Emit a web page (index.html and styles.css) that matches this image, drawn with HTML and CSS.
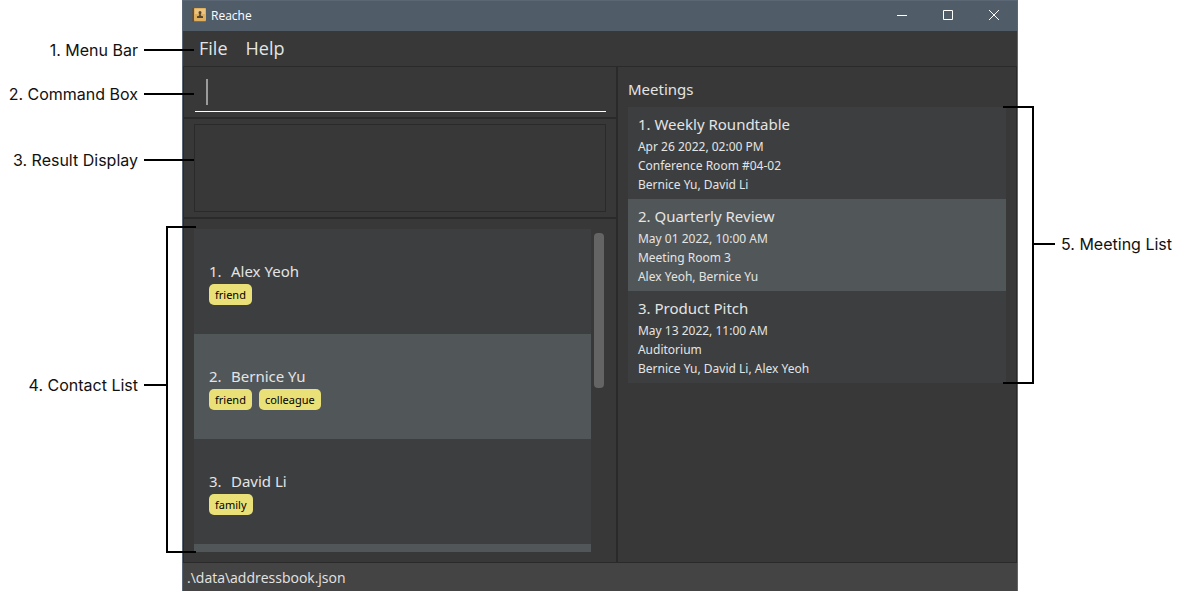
FILE: index.html
```html
<!DOCTYPE html>
<html lang="en">
<head>
<meta charset="utf-8">
<title>Reache</title>
<link rel="stylesheet" href="styles.css">
</head>
<body>
<main class="stage">
  <section class="window">
    <header class="titlebar">
      <svg class="app-icon" width="14" height="14" viewBox="0 0 14 14" aria-hidden="true">
        <rect x="0" y="0" width="14" height="14" rx="1" fill="#8a6a3e"/>
        <rect x="2" y="0" width="12" height="13" rx="1" fill="#dfae5f"/>
        <rect x="3" y="1" width="10" height="5" fill="#ecc481"/>
        <rect x="0" y="0" width="2" height="14" fill="#5e5141"/>
        <path d="M6.500 4.500a1.500 1.500 0 0 1 3 0c0 1-.5 1.300-.8 2 0 1 .3 1.500 2.300 1.800V10H5V8.300c2-.3 2.300-.8 2.300-1.800-.3-.7-.8-1-.8-2z" fill="#54452f"/>
      </svg>
      <h1 class="app-name">Reache</h1>
      <div class="window-controls">
        <button class="control" type="button" aria-label="Minimize"><svg width="10" height="10" viewBox="0 0 10 10"><path d="M0 5.500h10"/></svg></button>
        <button class="control" type="button" aria-label="Maximize"><svg width="10" height="10" viewBox="0 0 10 10"><path d="M.5.5h9v9h-9z"/></svg></button>
        <button class="control" type="button" aria-label="Close"><svg width="10" height="10" viewBox="0 0 10 10"><path d="M0 0l10 10M10 0L0 10"/></svg></button>
      </div>
    </header>

    <nav class="menubar">
      <button class="menu" type="button">File</button>
      <button class="menu" type="button">Help</button>
      <div class="callout callout-left callout-menu">1. Menu Bar<span class="leader leader-long"></span></div>
    </nav>

    <div class="panes">
      <div class="left-pane">
        <div class="command-pane">
          <input class="command-box" type="text" aria-label="Command">
          <span class="caret"></span>
          <div class="callout callout-left callout-command">2. Command Box<span class="leader leader-long"></span></div>
        </div>
        <div class="result-pane">
          <output class="result-display" aria-label="Result"></output>
          <div class="callout callout-left callout-result">3. Result Display<span class="leader leader-long"></span></div>
        </div>
        <div class="contact-pane">
          <ol class="contact-list">
            <li class="contact"><h2 class="contact-name"><span class="contact-index">1.</span>Alex Yeoh</h2><div class="tags"><span class="tag">friend</span></div></li>
            <li class="contact"><h2 class="contact-name"><span class="contact-index">2.</span>Bernice Yu</h2><div class="tags"><span class="tag">friend</span><span class="tag">colleague</span></div></li>
            <li class="contact"><h2 class="contact-name"><span class="contact-index">3.</span>David Li</h2><div class="tags"><span class="tag">family</span></div></li>
            <li class="contact"></li>
          </ol>
          <div class="scrollbar"><div class="thumb"></div></div>
          <div class="bracket bracket-left"></div>
          <div class="callout callout-left callout-contacts">4. Contact List<span class="leader leader-short"></span></div>
        </div>
      </div>

      <div class="right-pane">
        <h2 class="pane-title">Meetings</h2>
        <div class="meeting-area">
          <ol class="meeting-list">
            <li class="meeting"><h3 class="meeting-title">1. Weekly Roundtable</h3><p>Apr 26 2022, 02:00 PM</p><p>Conference Room #04-02</p><p>Bernice Yu, David Li</p></li>
            <li class="meeting"><h3 class="meeting-title">2. Quarterly Review</h3><p>May 01 2022, 10:00 AM</p><p>Meeting Room 3</p><p>Alex Yeoh, Bernice Yu</p></li>
            <li class="meeting"><h3 class="meeting-title">3. Product Pitch</h3><p>May 13 2022, 11:00 AM</p><p>Auditorium</p><p>Bernice Yu, David Li, Alex Yeoh</p></li>
          </ol>
          <div class="bracket bracket-right"></div>
          <div class="callout callout-right"><span class="leader leader-short"></span>5. Meeting List</div>
        </div>
      </div>
    </div>

    <footer class="statusbar">.\data\addressbook.json</footer>
  </section>
</main>
</body>
</html>
```
FILE: styles.css
```css
* { box-sizing: border-box; }

body {
  margin: 0;
  background: #fff;
  color: #e4e4e4;
  font-family: "Noto Sans", "Open Sans", sans-serif;
  font-size: 12px;
}

h1, h2, h3, p, ol { margin: 0; padding: 0; font-weight: 400; }
ol { list-style: none; }
button, input { font: inherit; color: inherit; background: none; border: 0; border-radius: 0; }

.stage { height: 100vh; padding: 0 182px; }

.window {
  display: flex;
  flex-direction: column;
  height: 100%;
  background: #383838;
  border: solid #5b6775;
  border-width: 1px 1px 0;
}

/* Title bar */
.titlebar {
  display: flex;
  align-items: center;
  flex: none;
  height: 30px;
  padding-left: 9px;
  background: #515c69;
  color: #fff;
}
.app-icon { margin: 0 5px 2px 0; }
.app-name { font-family: "Open Sans", sans-serif; font-size: 12px; line-height: 16px; }
.window-controls { display: flex; margin-left: auto; align-self: stretch; }
.control { display: flex; align-items: center; justify-content: center; width: 46px; padding: 0 0 2px; }
.control svg { fill: none; stroke: #fff; stroke-width: 1; }

/* Menu bar */
.menubar {
  position: relative;
  display: flex;
  flex: none;
  gap: 18px;
  height: 35px;
  padding: 0 16px;
}
.menu { padding: 0; font-family: "Open Sans", sans-serif; font-size: 18px; line-height: 35px; }

/* Split panes */
.panes {
  display: grid;
  grid-template-columns: 435fr 399fr;
  flex: 1;
  min-height: 0;
  border: 1px solid #2a2a2a;
}
.left-pane { display: flex; flex-direction: column; min-height: 0; border-right: 2px solid #2a2a2a; }

.command-pane {
  position: relative;
  flex: none;
  padding: 5px 10px 5px 11px;
  border-bottom: 2px solid #2a2a2a;
}
.command-box {
  display: block;
  width: 100%;
  height: 40px;
  padding: 0 12px;
  border-bottom: 1px solid #fff;
  outline: 0;
  font-size: 18px;
}
.caret { position: absolute; left: 22px; top: 12px; width: 2px; height: 26px; background: #9b9b9b; }

.result-pane { position: relative; flex: none; padding: 5px 10px; border-bottom: 2px solid #2a2a2a; }
.result-display { display: block; height: 88px; border: 1px solid #2a2a2a; }

.contact-pane { position: relative; display: flex; flex: 1; min-height: 0; padding: 10px; }
.contact-list { flex: 1; overflow: hidden; }
.contact { height: 105px; padding: 30px 15px 29px; background: #3c3e3f; }
.contact:nth-child(even), .meeting:nth-child(even) { background: #515658; }
.contact-name { display: flex; padding-bottom: 1px; font-size: 15px; line-height: 24px; }
.contact-index { min-width: 22px; }
.tags { display: flex; gap: 7px; }
.tag {
  padding: 0 6px;
  border-radius: 5px;
  background: #e9e077;
  color: #000;
  font-size: 11px;
  line-height: 21px;
}
.scrollbar { width: 15px; padding: 4px 2px 4px 3px; }
.thumb { height: 155px; border-radius: 4px; background: #646464; }

/* Meetings */
.right-pane { padding: 10px; }
.pane-title { font-size: 15px; line-height: 24px; padding-bottom: 6px; }
.meeting-area { position: relative; }
.meeting { padding: 5px 10px; background: #3c3e3f; line-height: 19px; }
.meeting-title { font-size: 15px; line-height: 25px; }

.statusbar {
  flex: none;
  height: 28px;
  padding: 1px 4px 0;
  background: #444;
  font-family: "Open Sans", sans-serif;
  font-size: 14px;
  line-height: 28px;
}

/* Callouts around the window */
.callout {
  position: absolute;
  display: flex;
  align-items: center;
  gap: 6px;
  color: #111;
  font-family: Inter, sans-serif;
  font-size: 16px;
  line-height: 20px;
  white-space: nowrap;
}
.leader { height: 2px; background: #000; }
.leader-long { width: 50px; }
.leader-short { width: 22px; }
.callout-left { right: calc(100% - 10px); }
.callout-menu { top: 9px; right: calc(100% - 11px); }
.callout-command { top: 17px; }
.callout-result { top: 31px; }
.callout-contacts { top: 156px; right: calc(100% + 18px); }
.callout-right { top: 127px; left: calc(100% + 27px); }

.bracket { position: absolute; border: 2px solid #000; }
.bracket-left { top: 7px; bottom: 9px; right: calc(100% - 12px); width: 30px; border-right: 0; }
.bracket-right { top: -1px; bottom: -1px; left: calc(100% - 3px); width: 31px; border-left: 0; }
```
